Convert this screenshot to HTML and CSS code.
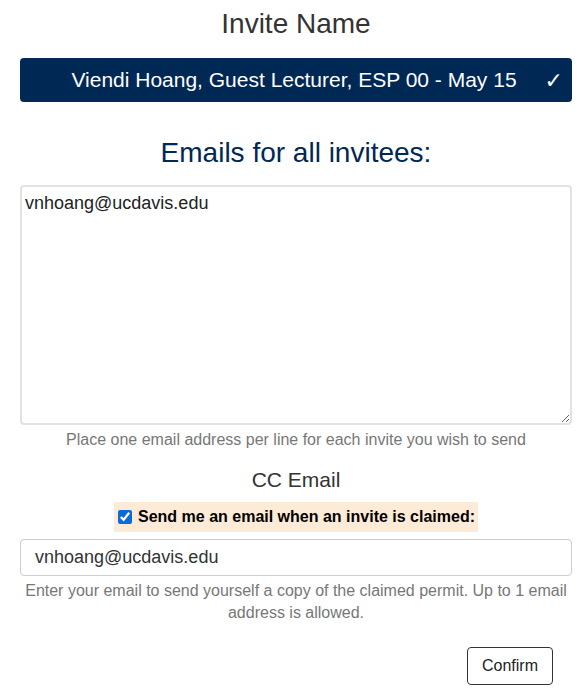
FILE: index.html
```html
<!DOCTYPE html>
<html lang="en">

<head>
  <meta charset="UTF-8">
  <meta name="viewport" content="width=device-width, initial-scale=1.0">
  <title>Invite</title>
  <link rel="stylesheet" href="styles.css">
</head>

<body>
  <div class="page">
    <h2 class="section-title">Invite Name</h2>
    <div class="invite-select">
      <span class="invite-name">Viendi Hoang, Guest Lecturer, ESP 00 - May 15</span>
      <span class="invite-check">&#10003;</span>
    </div>

    <h2 class="emails-title">Emails for all invitees:</h2>
    <textarea class="emails-box">vnhoang@ucdavis.edu</textarea>
    <p class="hint">Place one email address per line for each invite you wish to send</p>

    <h3 class="cc-title">CC Email</h3>
    <div class="cc-row">
      <label class="cc-label">
        <input type="checkbox" checked>
        Send me an email when an invite is claimed:
      </label>
    </div>
    <input type="text" class="cc-input" value="vnhoang@ucdavis.edu">
    <p class="hint">Enter your email to send yourself a copy of the claimed permit. Up to 1 email address is allowed.</p>

    <div class="form-buttons">
      <button type="button">Confirm</button>
    </div>
  </div>
</body>

</html>
```
FILE: styles.css
```css
body {
  font-family: 'Liberation Sans', Arial, sans-serif;
  background-color: #ffffff;
  color: #333;
  margin: 0;
}

.page {
  padding: 0 13px 0 20px;
}

.section-title {
  text-align: center;
  font-size: 28px;
  font-weight: 400;
  color: #333;
  margin: 8px 0 18px;
  line-height: 32px;
}

.invite-select {
  background-color: #002855;
  color: #fff;
  border-radius: 4px;
  height: 44px;
  display: flex;
  align-items: center;
  justify-content: flex-end;
  gap: 28px;
  padding: 0 9px 0 20px;
  font-size: 21px;
}

.invite-check {
  font-family: 'DejaVu Sans', sans-serif;
  font-size: 22px;
}

.emails-title {
  text-align: center;
  font-size: 28px;
  font-weight: 400;
  color: #002855;
  margin: 35px 0 16px;
  line-height: 32px;
}

.emails-box {
  display: block;
  box-sizing: border-box;
  width: 100%;
  height: 240px;
  border: 2px solid #e2e2e2;
  border-radius: 4px;
  padding: 6px 3px;
  font-family: 'Liberation Sans', Arial, sans-serif;
  font-size: 18px;
  color: #222;
  resize: vertical;
  margin: 0;
}

.hint {
  text-align: center;
  color: #777;
  font-size: 16px;
  line-height: 22px;
  margin: 4px 0 0;
}

.cc-title {
  text-align: center;
  font-size: 21px;
  font-weight: 400;
  color: #333;
  margin: 17px 0 10px;
  line-height: 24px;
}

.cc-row {
  display: flex;
  justify-content: center;
}

.cc-label {
  background-color: #fdebd8;
  color: #000;
  font-weight: 700;
  font-size: 16px;
  padding: 0 3px 0 4px;
  height: 30px;
  display: flex;
  align-items: center;
  gap: 6px;
}

.cc-label input {
  width: 14px;
  height: 14px;
  margin: 0;
  accent-color: #0b6bd8;
}

.cc-input {
  display: block;
  box-sizing: border-box;
  width: 100%;
  height: 37px;
  margin-top: 7px;
  border: 1px solid #ccc;
  border-radius: 4px;
  padding: 0 14px;
  font-family: 'Liberation Sans', Arial, sans-serif;
  font-size: 18px;
  color: #333;
}

.form-buttons {
  display: flex;
  justify-content: flex-end;
  margin-top: 23px;
  padding-right: 19px;
}

.form-buttons button {
  background-color: #fff;
  color: #222;
  border: 1px solid #333;
  border-radius: 4px;
  padding: 0 14px;
  height: 38px;
  font-family: 'Liberation Sans', Arial, sans-serif;
  font-size: 16px;
  cursor: pointer;
}
```
